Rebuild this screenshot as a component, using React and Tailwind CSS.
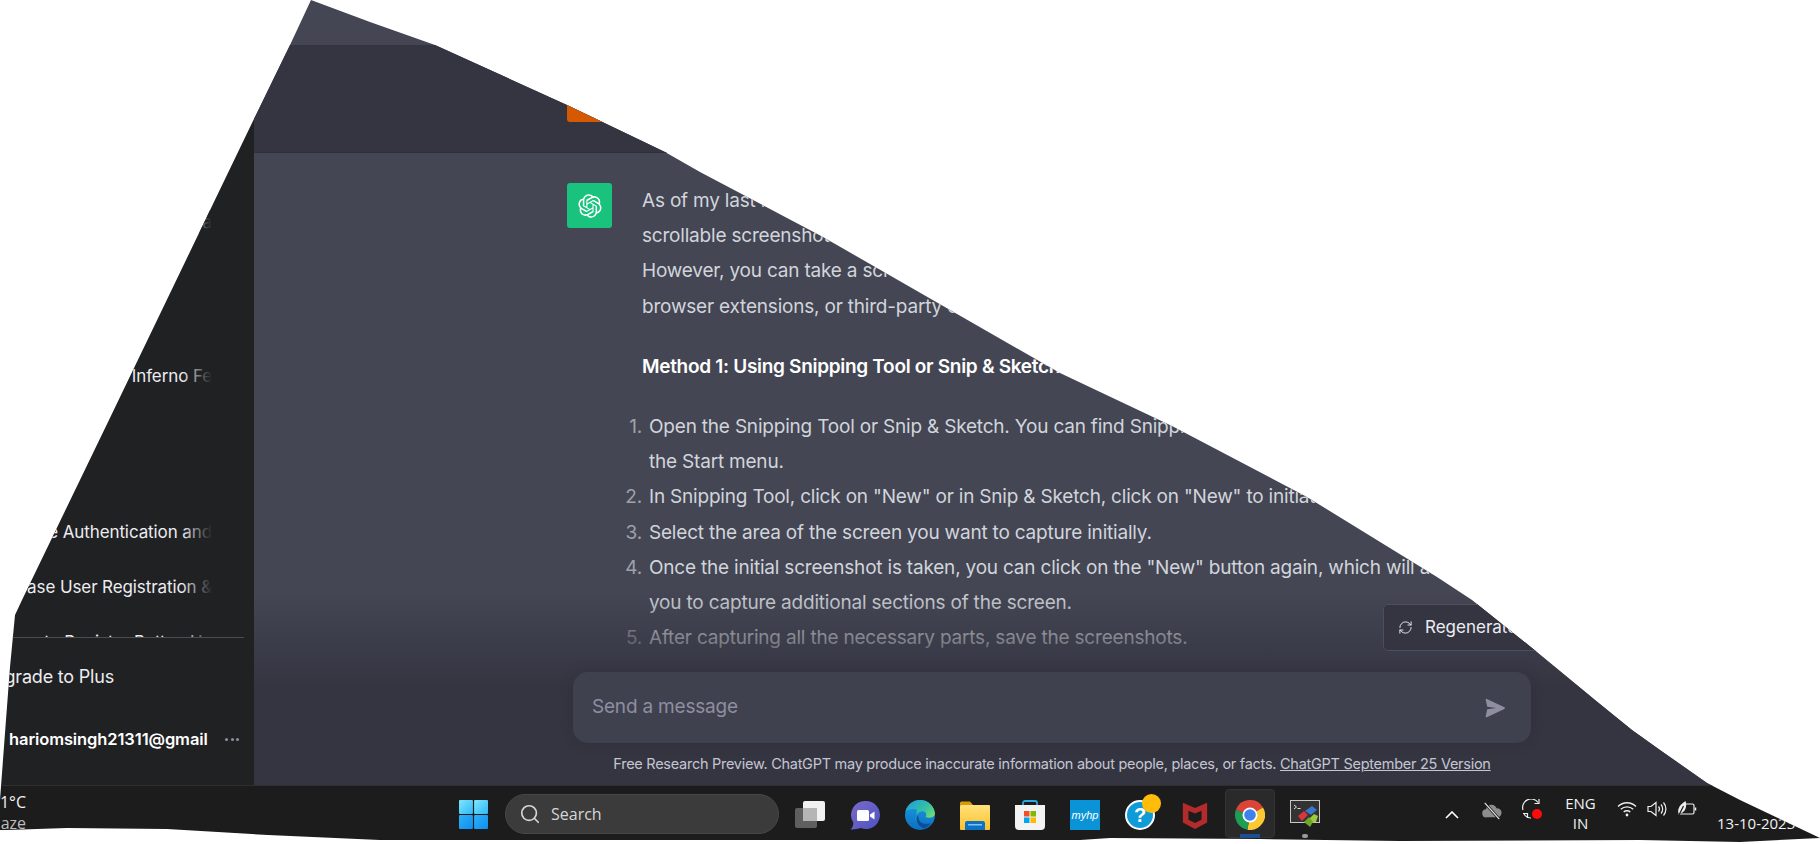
import React from 'react';
import { RefreshCw, Search } from 'lucide-react';

const GPT_LOGO =
  'M37.5324 16.8707C37.9808 15.5241 38.1363 14.0974 37.9886 12.6859C37.8409 11.2744 37.3934 9.91076 36.676 8.68622C35.6126 6.83404 33.9882 5.3676 32.0373 4.4985C30.0864 3.62941 27.9098 3.40259 25.8215 3.85078C24.8796 2.7893 23.7219 1.94125 22.4257 1.36341C21.1295 0.785575 19.7249 0.491269 18.3058 0.500197C16.1708 0.495044 14.0893 1.16803 12.3614 2.42214C10.6335 3.67624 9.34853 5.44666 8.6917 7.47815C7.30085 7.76286 5.98686 8.3414 4.8377 9.17505C3.68854 10.0087 2.73073 11.0782 2.02839 12.312C0.956464 14.1591 0.498905 16.2988 0.721698 18.4228C0.944492 20.5467 1.83612 22.5449 3.268 24.1293C2.81966 25.4759 2.66413 26.9026 2.81182 28.3141C2.95951 29.7256 3.40701 31.0892 4.12437 32.3138C5.18791 34.1659 6.8123 35.6322 8.76321 36.5013C10.7141 37.3704 12.8907 37.5973 14.9789 37.1492C15.9208 38.2107 17.0786 39.0587 18.3747 39.6366C19.6709 40.2144 21.0755 40.5087 22.4946 40.4998C24.6307 40.5054 26.7133 39.8321 28.4418 38.5772C30.1704 37.3223 31.4556 35.5506 32.1119 33.5179C33.5027 33.2332 34.8167 32.6547 35.9659 31.821C37.115 30.9874 38.0728 29.9178 38.7752 28.684C39.8458 26.8371 40.3023 24.6979 40.0789 22.5748C39.8556 20.4517 38.9639 18.4544 37.5324 16.8707ZM22.4978 37.8849C20.7443 37.8874 19.0459 37.2733 17.6994 36.1501C17.7601 36.117 17.8666 36.0586 17.936 36.0161L25.9004 31.4156C26.1003 31.3019 26.2663 31.137 26.3813 30.9378C26.4964 30.7386 26.5563 30.5124 26.5549 30.2825V19.0542L29.9213 20.998C29.9389 21.0068 29.9541 21.0198 29.9656 21.0359C29.977 21.052 29.9842 21.0707 29.9867 21.0902V30.3889C29.9842 32.375 29.1946 34.2791 27.7909 35.6841C26.3872 37.0892 24.4838 37.8806 22.4978 37.8849ZM6.39227 31.0064C5.51397 29.4888 5.19742 27.7107 5.49804 25.9832C5.55718 26.0187 5.66048 26.0818 5.73461 26.1244L13.699 30.7248C13.8975 30.8408 14.1233 30.902 14.3532 30.902C14.583 30.902 14.8088 30.8408 15.0073 30.7248L24.731 25.1103V28.9979C24.7321 29.0177 24.7283 29.0376 24.7199 29.0556C24.7115 29.0736 24.6988 29.0893 24.6829 29.1012L16.6317 33.7497C14.9096 34.7416 12.8643 35.0097 10.9447 34.4954C9.02506 33.9811 7.38785 32.7263 6.39227 31.0064ZM4.29707 13.6194C5.17156 12.0998 6.55279 10.9364 8.19885 10.3327C8.19885 10.4013 8.19491 10.5228 8.19491 10.6071V19.808C8.19351 20.0378 8.25334 20.2638 8.36823 20.4629C8.48312 20.6619 8.64893 20.8267 8.84863 20.9404L18.5723 26.5542L15.206 28.4979C15.1894 28.5089 15.1703 28.5155 15.1505 28.5173C15.1307 28.5191 15.1107 28.516 15.0924 28.5082L7.04046 23.8557C5.32135 22.8601 4.06716 21.2235 3.55289 19.3046C3.03862 17.3858 3.30624 15.3413 4.29707 13.6194ZM31.955 20.0556L22.2312 14.4411L25.5976 12.4981C25.6142 12.4872 25.6333 12.4805 25.6531 12.4787C25.6729 12.4769 25.6928 12.4801 25.7111 12.4879L33.7631 17.1364C34.9967 17.849 36.0017 18.8982 36.6606 20.1613C37.3194 21.4244 37.6047 22.849 37.4832 24.2684C37.3617 25.6878 36.8382 27.0432 35.9743 28.1759C35.1103 29.3086 33.9415 30.1717 32.6047 30.6641C32.6047 30.5947 32.6047 30.4733 32.6047 30.3889V21.188C32.6066 20.9586 32.5474 20.7328 32.4332 20.5338C32.319 20.3348 32.154 20.1698 31.955 20.0556ZM35.3055 15.0128C35.2464 14.9765 35.1431 14.9142 35.069 14.8717L27.1045 10.2712C26.906 10.1554 26.6803 10.0943 26.4504 10.0943C26.2206 10.0943 25.9948 10.1554 25.7963 10.2712L16.0726 15.8858V11.9982C16.0715 11.9783 16.0753 11.9585 16.0837 11.9405C16.0921 11.9225 16.1048 11.9068 16.1207 11.8949L24.1719 7.25025C25.4053 6.53903 26.8158 6.19376 28.2383 6.25482C29.6608 6.31589 31.0364 6.78077 32.2044 7.59508C33.3723 8.40939 34.2842 9.53945 34.8334 10.8531C35.3826 12.1667 35.5464 13.6095 35.3055 15.0128ZM14.2424 21.9419L10.8752 19.9981C10.8576 19.9893 10.8423 19.9763 10.8309 19.9602C10.8195 19.9441 10.8122 19.9254 10.8098 19.9058V10.6071C10.8107 9.18295 11.2173 7.78848 11.9819 6.58696C12.7466 5.38544 13.8377 4.42659 15.1275 3.82264C16.4173 3.21869 17.8524 2.99464 19.2649 3.1767C20.6775 3.35876 22.0089 3.93941 23.1034 4.85067C23.0427 4.88379 22.937 4.94215 22.8668 4.98473L14.9024 9.58517C14.7025 9.69878 14.5366 9.86356 14.4215 10.0626C14.3065 10.2616 14.2466 10.4877 14.2479 10.7175L14.2424 21.9419ZM16.071 17.9991L20.4018 15.4978L24.7325 17.9975V22.9985L20.4018 25.4983L16.071 22.9985V17.9991Z';

// taskbar icons, all drawn on a 30x30 box
const WindowsIcon = () => (
  <svg viewBox="0 0 30 30" className="w-[29px] h-[29px]">
    <defs>
      <linearGradient id="winTop" x1="0" y1="0" x2="1" y2="1">
        <stop offset="0" stopColor="#7fe6fd" />
        <stop offset="1" stopColor="#2fb8f6" />
      </linearGradient>
      <linearGradient id="winBottom" x1="0" y1="0" x2="1" y2="1">
        <stop offset="0" stopColor="#2cb2f5" />
        <stop offset="1" stopColor="#0f8ef0" />
      </linearGradient>
    </defs>
    <rect x="0" y="0" width="14.4" height="14.4" rx="1" fill="url(#winTop)" />
    <rect x="15.6" y="0" width="14.4" height="14.4" rx="1" fill="url(#winTop)" />
    <rect x="0" y="15.6" width="14.4" height="14.4" rx="1" fill="url(#winBottom)" />
    <rect x="15.6" y="15.6" width="14.4" height="14.4" rx="1" fill="url(#winBottom)" />
  </svg>
);

const TaskViewIcon = () => (
  <svg viewBox="0 0 30 30" className="w-[30px] h-[30px]">
    <rect x="0" y="8" width="22" height="20" rx="2" fill="#5f5f5f" />
    <rect x="8" y="1" width="22" height="20" rx="2" fill="#f1f1f1" />
    <rect x="8" y="8" width="14" height="13" fill="#b5b5b5" />
  </svg>
);

const ChatIcon = () => (
  <svg viewBox="0 0 30 30" className="w-[30px] h-[30px]">
    <defs>
      <linearGradient id="chatBg" x1="0" y1="0" x2="1" y2="1">
        <stop offset="0" stopColor="#7b6bc8" />
        <stop offset="1" stopColor="#4c52c4" />
      </linearGradient>
    </defs>
    <path d="M16 1a14 14 0 1 1-5 27.1C8 29 4 29.7 0.500 29.500 2.500 27.500 3.500 25 3.300 22.500A14 14 0 0 1 16 1Z" fill="url(#chatBg)" />
    <rect x="7" y="10" width="12" height="11" rx="1.500" fill="#fff" />
    <path d="M20 14.500l4.500-3v8l-4.500-3Z" fill="#fff" />
  </svg>
);

const EdgeIcon = () => (
  <svg viewBox="0 0 30 30" className="w-[30px] h-[30px]">
    <defs>
      <linearGradient id="edgeBase" x1="0" y1="0" x2="0" y2="1">
        <stop offset="0" stopColor="#1b9de2" />
        <stop offset="1" stopColor="#0d6fc0" />
      </linearGradient>
      <linearGradient id="edgeTop" x1="0" y1="0" x2="1" y2="0.800">
        <stop offset="0" stopColor="#1a9be0" />
        <stop offset="0.600" stopColor="#35c1a5" />
        <stop offset="1" stopColor="#7ee06a" />
      </linearGradient>
    </defs>
    <circle cx="15" cy="15" r="15" fill="url(#edgeBase)" />
    <path d="M10.500 21C10 14 15 10 19 11.500c2.500 1 3 3.500 1.500 5.500 4 1.500 9 .5 9.500-3C29.500 6 23 0 15 0 8 0 2 5 .5 11.500 3 9 9 8 12 10" fill="url(#edgeTop)" />
    <path d="M13 15c-3 4-1 11 6 13.500 3-1 5.500-3 7-5.500-4 1.500-9 1-11-1.500-1.500-2-1.500-4.500-2-6.500Z" fill="#0b4f9c" />
  </svg>
);

const FolderIcon = () => (
  <svg viewBox="0 0 30 30" className="w-[30px] h-[30px]">
    <defs>
      <linearGradient id="folderBg" x1="0" y1="0" x2="0" y2="1">
        <stop offset="0" stopColor="#ffe27a" />
        <stop offset="1" stopColor="#fcc02e" />
      </linearGradient>
    </defs>
    <path d="M0 3a1.500 1.500 0 0 1 1.500-1.500H10l3 3.500H0Z" fill="#d89c0b" />
    <rect x="0" y="5" width="30" height="25" rx="1" fill="url(#folderBg)" />
    <path d="M5 30v-7a2 2 0 0 1 2-2h16a2 2 0 0 1 2 2v7Z" fill="#0d72c4" />
    <rect x="8" y="24" width="14" height="1.500" fill="#7ec4ee" />
  </svg>
);

const StoreIcon = () => (
  <svg viewBox="0 0 30 30" className="w-[30px] h-[30px]">
    <path d="M8 6V3a2 2 0 0 1 2-2h10a2 2 0 0 1 2 2v3" fill="none" stroke="#29a9df" strokeWidth="1.800" />
    <path d="M0 5h30v21a4 4 0 0 1-4 4H4a4 4 0 0 1-4-4Z" fill="#f3f3f3" />
    <rect x="9" y="11" width="5.500" height="5.500" fill="#f25022" />
    <rect x="15.500" y="11" width="5.500" height="5.500" fill="#7fba00" />
    <rect x="9" y="17.500" width="5.500" height="5.500" fill="#00a4ef" />
    <rect x="15.500" y="17.500" width="5.500" height="5.500" fill="#ffb900" />
  </svg>
);

const HelpIcon = () => (
  <div className="relative w-[30px] h-[30px] rounded-full bg-[#0f9bd7] border-2 border-white flex items-center justify-center">
    <span className="text-white font-bold text-[20px] leading-none font-['Liberation_Sans',sans-serif]">?</span>
    <span className="absolute -top-[8px] -right-[8px] w-[19px] h-[19px] rounded-full bg-[#ffbc0a]" />
  </div>
);

const McafeeIcon = () => (
  <svg viewBox="0 0 30 30" className="w-[28px] h-[30px]">
    <path d="M2 2l13 5.500L28 2v21L15 30 2 23Z" fill="#b52a2a" />
    <path d="M8 10.500l7 3 7-3V20l-7 3.500L8 20Z" fill="#1c1c1c" />
  </svg>
);

const pieSector = (a, b) => {
  const pt = (deg) => [15 + 15 * Math.cos((deg * Math.PI) / 180), 15 + 15 * Math.sin((deg * Math.PI) / 180)];
  const [x1, y1] = pt(a);
  const [x2, y2] = pt(b);
  return `M15 15L${x1} ${y1}A15 15 0 0 1 ${x2} ${y2}Z`;
};

const ChromeIcon = () => (
  <svg viewBox="0 0 30 30" className="w-[30px] h-[30px]">
    <path d={pieSector(200, 330)} fill="#db4437" />
    <path d={pieSector(330, 100)} fill="#fcc934" />
    <path d={pieSector(100, 200)} fill="#1e9e54" />
    <circle cx="15" cy="15" r="7.500" fill="#fff" />
    <circle cx="15" cy="15" r="5.800" fill="#3d80ee" />
  </svg>
);

const TerminalIcon = () => (
  <svg viewBox="0 0 30 30" className="w-[30px] h-[30px]">
    <rect x="0.500" y="0.500" width="29" height="22" fill="#333" stroke="#c8c8c8" />
    <path d="M4 5l2.500 2L4 9" fill="none" stroke="#ddd" />
    <rect x="7.500" y="8" width="3" height="1" fill="#ddd" />
    <path d="M8 16l6-5 4 4-6 6Z" fill="#d8363a" />
    <path d="M15 11l7-5 5 4-6 5Z" fill="#3a78c9" />
    <path d="M18 20l6-6 4 2-2 6-6 1Z" fill="#9ccb3b" />
    <path d="M14 22l5-5 4 5-3 5Z" fill="#6fa52b" />
  </svg>
);

const CloudOffIcon = () => (
  <svg viewBox="0 0 22 22" className="w-[20px] h-[20px]">
    <path d="M5 18a4.500 4.500 0 0 1-.5-9 6 6 0 0 1 11.500-1 5 5 0 0 1 1 10Z" fill="#8d8d8d" />
    <path d="M3 2l16 18" stroke="#1c1c1c" strokeWidth="3" />
    <path d="M3 2l16 18" stroke="#eee" strokeWidth="1.200" />
  </svg>
);

const SyncIcon = () => (
  <div className="relative w-[20px] h-[20px]">
    <svg viewBox="0 0 20 20" className="w-[20px] h-[20px]" fill="none" stroke="#eee" strokeWidth="1.200">
      <path d="M1 11A8.500 8.500 0 0 1 16 3.500" />
      <path d="M17 0v4.500h-4.500" />
      <path d="M1 14.500h4.500V19" />
      <path d="M2 15c2 3 5 4 7 4" />
    </svg>
    <span className="absolute left-[10px] top-[10px] w-[10px] h-[10px] rounded-full bg-[#ff0a0a]" />
  </div>
);

const WifiIcon = () => (
  <svg viewBox="0 0 20 16" className="w-[20px] h-[16px]" fill="none" stroke="#eee" strokeWidth="1.300">
    <path d="M1 5.500c5-5 13-5 18 0" />
    <path d="M3.800 8.300c3.500-3.300 9-3.300 12.400 0" />
    <path d="M6.700 11c1.800-1.700 4.800-1.700 6.600 0" />
    <circle cx="10" cy="14" r="1.400" fill="#eee" stroke="none" />
  </svg>
);

const SpeakerIcon = () => (
  <svg viewBox="0 0 20 16" className="w-[20px] h-[16px]" fill="none" stroke="#eee" strokeWidth="1.200">
    <path d="M1 5.500h3L9 1.500v13l-5-4H1Z" />
    <path d="M11.500 5.500c1.300 1.500 1.300 3.500 0 5" />
    <path d="M14 3.500c2.200 2.500 2.200 6.500 0 9" />
    <path d="M16.500 1.500c3.200 3.700 3.200 9.300 0 13" />
  </svg>
);

const BatteryIcon = () => (
  <svg viewBox="0 0 20 16" className="w-[20px] h-[16px]" fill="none" stroke="#eee" strokeWidth="1.200">
    <path d="M7 3h8.500a1.500 1.500 0 0 1 1.500 1.500v7a1.500 1.500 0 0 1-1.500 1.500H1.500" />
    <path d="M18.500 6.500v3" strokeWidth="1.500" />
    <path d="M1.500 12.500C0 7 4 3 8.500 0c1.500 4 .5 9.500-3 11.500-1.200.7-2.700 1-4 1Z" fill="#eee" stroke="none" />
    <path d="M2 14L6.500 5" stroke="#1c1c1c" />
  </svg>
);

const textFont = "font-['Inter','Liberation_Sans',sans-serif]";

const HistoryRow = ({ title, className }) => (
  <div className={`relative w-[212px] h-[24px] flex justify-end overflow-hidden whitespace-nowrap text-[17px] tracking-[-0.1px] leading-[24px] text-[#ececf1] ${className}`}>
    <span className="shrink-0">{title}</span>
    <span className="absolute right-0 top-0 h-full w-[30px] bg-linear-to-l from-[#202123] to-transparent" />
  </div>
);

const Sidebar = () => (
  <aside className={`w-[254px] shrink-0 bg-[#202123] flex flex-col ${textFont}`}>
    <div className="h-[637px] overflow-hidden">
      <HistoryRow title="Create Chart Da" className="mt-[210px]" />
      <HistoryRow title="Dark Inferno Fe" className="mt-[130px]" />
      <HistoryRow title="Base Authentication and" className="mt-[132px]" />
      <HistoryRow title="Database User Registration &" className="mt-[31px]" />
      <HistoryRow title="to Register Button Ha" className="mt-[31px]" />
    </div>
    <div className="h-px w-[244px] bg-[#4d4d4f]" />
    <div className="pt-[27px] whitespace-nowrap flex justify-end w-[114px] text-[18px] tracking-[-0.2px] leading-[24px] text-[#ececf1]">
      <span className="shrink-0">Upgrade to Plus</span>
    </div>
    <div className="mt-[38px] flex items-center">
      <div className="w-[208px] pl-[9px] h-[24px] whitespace-nowrap text-[16.500px] tracking-[-0.1px] leading-[24px] font-semibold text-white">
        hariomsingh21311@gmail
      </div>
      <span className="ml-[17px] flex gap-[2.500px]">
        <i className="w-[3px] h-[3px] rounded-full bg-[#8e8ea0]" />
        <i className="w-[3px] h-[3px] rounded-full bg-[#8e8ea0]" />
        <i className="w-[3px] h-[3px] rounded-full bg-[#8e8ea0]" />
      </span>
    </div>
  </aside>
);

const Line = ({ children }) => <div className="whitespace-nowrap">{children}</div>;

const Step = ({ n, lines }) => (
  <div className="flex">
    <span className="w-[37px] pr-[7px] text-right text-[#a0a1aa]">{n}.</span>
    <div>
      {lines.map((l) => (
        <Line key={l}>{l}</Line>
      ))}
    </div>
  </div>
);

const Conversation = () => (
  <section className="relative flex-1 min-w-0 bg-[#444654] overflow-hidden flex flex-col">
    <div className="h-[45px] shrink-0" />
    <div className="h-[108px] shrink-0 bg-[#343541] border-b border-[#2f303b] pl-[313px] pt-[32px]">
      <div className="w-[45px] h-[45px] rounded-[3px] bg-[#d55900]" />
    </div>
    <div className={`flex pl-[313px] pt-[30px] gap-[30px] text-[19px] tracking-[-0.2px] leading-[35.200px] text-[#d1d5db] ${textFont}`}>
      <div className="w-[45px] h-[45px] shrink-0 rounded-[3px] bg-[#19c37d] flex items-center justify-center">
        <svg viewBox="0 0 41 41" className="w-[24px] h-[24px]" fill="#fff">
          <path d={GPT_LOGO} />
        </svg>
      </div>
      <div>
        <Line>As of my last knowledge update in September 2021, Google Chrome did not have a built-in</Line>
        <Line>scrollable screenshot tool available for all of its users on the desktop version.</Line>
        <Line>However, you can take a screenshot of a whole page with the Snipping Tool,</Line>
        <Line>browser extensions, or third-party desktop applications.</Line>
        <div className="mt-[25px] font-semibold tracking-[-0.3px] text-white whitespace-nowrap">Method 1: Using Snipping Tool or Snip & Sketch (Windows)</div>
        <div className="mt-[25px] -ml-[30px]">
          <Step n={1} lines={['Open the Snipping Tool or Snip & Sketch. You can find Snipping Tool by searching it in', 'the Start menu.']} />
          <Step n={2} lines={['In Snipping Tool, click on "New" or in Snip & Sketch, click on "New" to initiate a snip.']} />
          <Step n={3} lines={['Select the area of the screen you want to capture initially.']} />
          <Step n={4} lines={['Once the initial screenshot is taken, you can click on the "New" button again, which will allow', 'you to capture additional sections of the screen.']} />
          <Step n={5} lines={['After capturing all the necessary parts, save the screenshots.']} />
        </div>
      </div>
    </div>

    {/* prompt area sits over the end of the thread */}
    <div className={`absolute left-0 right-0 bottom-0 h-[195px] bg-linear-to-t from-[#343541] via-[#343541] via-50% to-transparent pl-[319px] ${textFont}`}>
      <div className="h-[62px] pt-[14px] flex justify-end w-[968px]">
        <div className="w-[158px] h-[47px] rounded-[5px] border border-[#4d4f5f] bg-[#343541] flex items-center pl-[14px] gap-[12px] whitespace-nowrap text-[17px] text-[#ececf1]">
          <RefreshCw size={15} strokeWidth={1.500} />
          Regenerate
        </div>
      </div>
      <div className="mt-[20px] w-[958px] h-[71px] rounded-[15px] bg-[#40414f] shadow-[0_0_15px_rgba(0,0,0,0.1)] flex items-center justify-between pl-[19px] pr-[26px] text-[19px] tracking-[-0.2px] text-[#8e8ea0]">
        <span>Send a message</span>
        <svg viewBox="0 0 16 16" className="w-[20px] h-[20px]" fill="#8e8ea0">
          <path d="M.5 1.400a.7.7 0 0 1 1-.7l14 6.600a.8.8 0 0 1 0 1.400l-14 6.600a.7.7 0 0 1-1-.7L1.800 9 9 8 1.800 7Z" />
        </svg>
      </div>
      <div className="mt-[9px] w-[958px] text-center whitespace-nowrap text-[14.500px] tracking-[-0.27px] leading-[24px] text-[#c5c5d2]">
        Free Research Preview. ChatGPT may produce inaccurate information about people, places, or facts. <span className="underline">ChatGPT September 25 Version</span>
      </div>
    </div>
  </section>
);

const Taskbar = () => (
  <footer className="relative h-[59px] shrink-0 bg-[#1c1c1c] border-t border-[#2f2f2f] flex items-start font-['Open_Sans',sans-serif] text-[#f2f2f2]">
    <div className="w-[26px] pt-[6px] flex flex-col items-end text-[16px] leading-[21px] whitespace-nowrap">
      <span>31°C</span>
      <span className="text-[#bdbdbd]">Haze</span>
    </div>
    <div className="ml-[433px] mt-[14px] shrink-0">
      <WindowsIcon />
    </div>
    <div className="ml-[17px] mt-[8px] w-[274px] h-[40px] shrink-0 rounded-full bg-[#3b3b3b] border border-[#474747] flex items-center pl-[13px] gap-[10px] text-[16px] text-[#d6d6d6]">
      <Search size={22} strokeWidth={1.800} />
      Search
    </div>
    <div className="ml-[16px] mt-[14px] flex gap-[25px] shrink-0">
      <TaskViewIcon />
      <ChatIcon />
      <EdgeIcon />
      <FolderIcon />
      <StoreIcon />
      <div className="w-[30px] h-[30px] bg-[#0a93d6] flex items-center justify-center text-[11px] italic text-white font-['Liberation_Sans',sans-serif]">myhp</div>
      <HelpIcon />
      <div className="w-[30px] flex justify-center">
        <McafeeIcon />
      </div>
      <div className="relative w-[30px]">
        <div className="absolute -left-[10px] -top-[11px] w-[50px] h-[49px] rounded-[4px] bg-[#2a2a2a] border border-[#333]" />
        <div className="absolute left-[5px] top-[34px] w-[20px] h-[4px] bg-[#1c4f8f]" />
        <div className="relative">
          <ChromeIcon />
        </div>
      </div>
      <div className="relative w-[30px]">
        <TerminalIcon />
        <div className="absolute left-[12px] top-[34px] w-[6px] h-[4px] rounded-[2px] bg-[#9a9a9a]" />
      </div>
    </div>
    <div className="ml-[125px] mt-[16px] shrink-0">
      <svg viewBox="0 0 14 8" className="w-[14px] h-[8px] mt-[9px]" fill="none" stroke="#fff" strokeWidth="1.600">
        <path d="M1 7l6-6 6 6" />
      </svg>
    </div>
    <div className="ml-[23px] mt-[15px] shrink-0">
      <CloudOffIcon />
    </div>
    <div className="ml-[20px] mt-[13px] shrink-0">
      <SyncIcon />
    </div>
    <div className="ml-[24px] mt-[7px] w-[29px] flex flex-col items-center text-[15px] leading-[20px] shrink-0">
      <span>ENG</span>
      <span>IN</span>
    </div>
    <div className="ml-[22px] mt-[15px] flex gap-[10px] shrink-0">
      <WifiIcon />
      <SpeakerIcon />
      <BatteryIcon />
    </div>
    <div className="ml-[20px] mt-[27px] text-[15px] leading-[20px] whitespace-nowrap">13-10-2023</div>
  </footer>
);

export default function App() {
  return (
    <div className="w-[1820px] h-[844px] overflow-hidden bg-white">
      <div className="w-full h-full flex flex-col [clip-path:polygon(311px_0,370px_22px,435px_45px,567px_105px,665px_152px,700px_172px,823px_237px,1060px_373px,1172px_426px,1307px_497px,1437px_577px,1472px_600px,1532px_648px,1595px_700px,1632px_730px,1660px_750px,1707px_783px,1740px_800px,1820px_838px,1740px_842px,1640px_840px,1400px_841px,1260px_839px,1110px_838px,1080px_840px,780px_840px,380px_840px,268px_835px,167px_829px,67px_828px,7px_830px,0_830px,0_800px,5px_733px,10px_667px,15px_615px,22px_600px,108px_422px,252px_123px,290px_45px)]">
        <div className="flex-1 min-h-0 flex">
          <Sidebar />
          <Conversation />
        </div>
        <Taskbar />
      </div>
    </div>
  );
}
